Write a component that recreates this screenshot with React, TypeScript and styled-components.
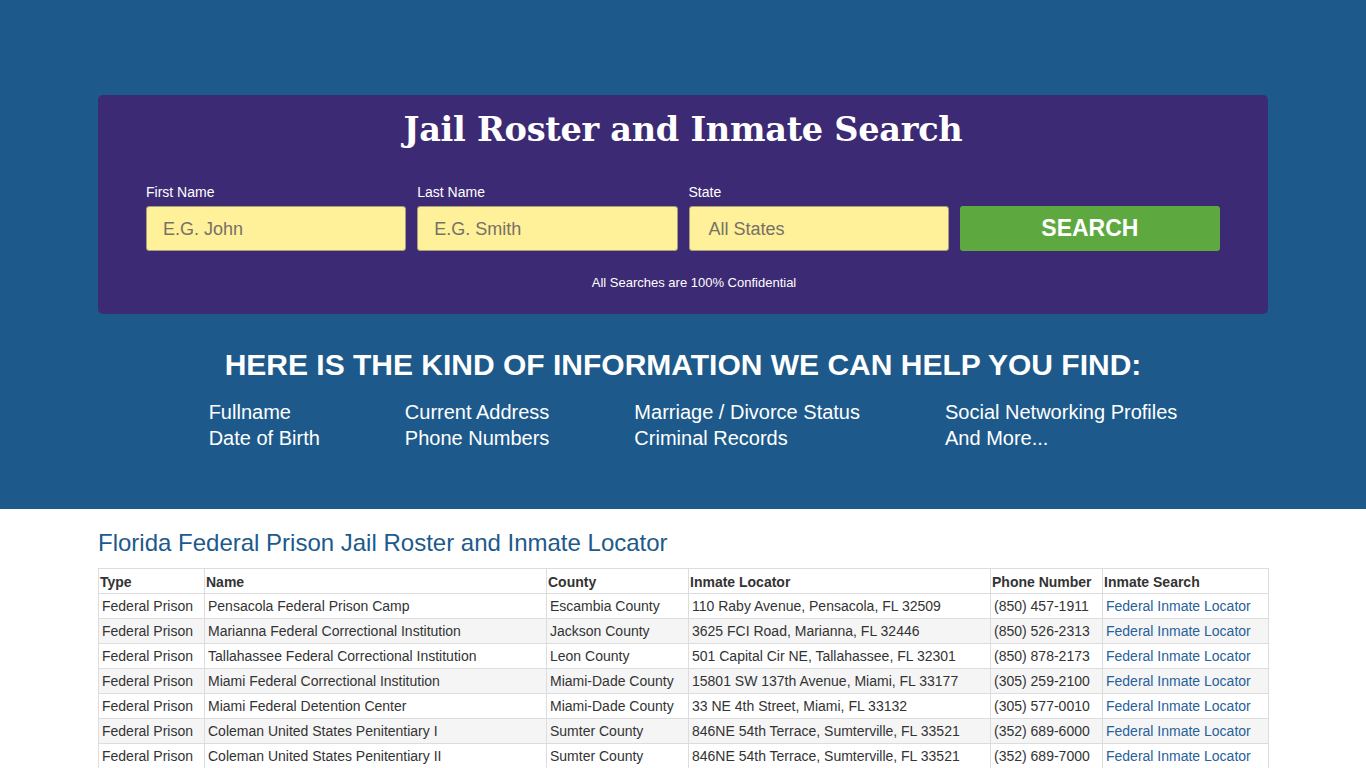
import React from "react";
import styled, { createGlobalStyle } from "styled-components";

const GlobalStyle = createGlobalStyle`
    html, body {
        margin: 0;
        padding: 0;
        background: #ffffff;
        font-family: "Liberation Sans", Arial, sans-serif;
        color: #333333;
    }
    * { box-sizing: border-box; }
`;

const Hero = styled.section`
    background: #1d5a8b;
    padding: 95px 0 58px;
`;

const Container = styled.div`
    width: 1170px;
    margin: 0 auto;
`;

const SearchBox = styled.div`
    background: #3d2a74;
    border-radius: 5px;
    padding: 12px 48px 24px;
`;

const Title = styled.h1`
    margin: 0 0 33px;
    text-align: center;
    color: #ffffff;
    font-family: "DejaVu Serif", Georgia, serif;
    font-weight: bold;
    font-size: 33.6px;
    line-height: 44px;
    letter-spacing: -0.3px;
`;

const FormGrid = styled.div`
    display: grid;
    grid-template-columns: repeat(4, 1fr);
    column-gap: 11px;
    align-items: end;
`;

const Field = styled.div`
    display: flex;
    flex-direction: column;
`;

const Label = styled.label`
    color: #ffffff;
    font-size: 14px;
    line-height: 16px;
    margin-bottom: 6px;
`;

const Input = styled.div<{ $pad?: number }>`
    height: 45px;
    background: #fff09a;
    border: 1px solid #a89d7a;
    border-radius: 3px;
    color: #777166;
    font-size: 18px;
    line-height: 44px;
    padding-left: ${(p) => p.$pad ?? 16}px;
`;

const Button = styled.button`
    height: 45px;
    background: #5ea93f;
    border: none;
    border-radius: 3px;
    color: #ffffff;
    font-family: "Liberation Sans", Arial, sans-serif;
    font-weight: bold;
    font-size: 23px;
    padding-top: 1px;
`;

const Note = styled.p`
    margin: 25px 0 0;
    padding-left: 22px;
    text-align: center;
    color: #ffffff;
    font-size: 13px;
    line-height: 14px;
`;

const InfoHeading = styled.h2`
    margin: 33px 0 16px;
    text-align: center;
    color: #ffffff;
    font-weight: bold;
    font-size: 30px;
    line-height: 36px;
`;

const InfoList = styled.div`
    display: flex;
    justify-content: center;
    gap: 85px;
    padding-left: 20px;
`;

const InfoCol = styled.ul`
    list-style: none;
    margin: 0;
    padding: 0;
    color: #ffffff;
    font-size: 20px;
    line-height: 26px;
`;

const Main = styled.main`
    padding: 18px 0 0;
`;

const SectionTitle = styled.h3`
    margin: 0 0 9px;
    color: #1d5a8b;
    font-weight: normal;
    font-size: 24px;
    line-height: 32px;
`;

const Table = styled.table`
    width: 100%;
    border-collapse: collapse;
    table-layout: fixed;
    font-size: 14px;
`;

const Th = styled.th<{ $w: number }>`
    width: ${(p) => p.$w}px;
    text-align: left;
    font-weight: bold;
    font-size: 14px;
    color: #333333;
    border: 1px solid #dddddd;
    padding: 1px 1px 0;
    height: 25px;
    white-space: nowrap;
`;

const Row = styled.tr`
    &:nth-child(even) {
        background: #f5f5f5;
    }
`;

const Td = styled.td`
    border: 1px solid #dddddd;
    padding: 0 3px;
    height: 25px;
    color: #333333;
    white-space: nowrap;
`;

const Link = styled.a`
    color: #27619a;
    text-decoration: none;
`;

const columns = [
    { label: "Type", w: 106 },
    { label: "Name", w: 342 },
    { label: "County", w: 142 },
    { label: "Inmate Locator", w: 302 },
    { label: "Phone Number", w: 112 },
    { label: "Inmate Search", w: 166 },
];

const prisons = [
    ["Pensacola Federal Prison Camp", "Escambia County", "110 Raby Avenue, Pensacola, FL 32509", "(850) 457-1911"],
    ["Marianna Federal Correctional Institution", "Jackson County", "3625 FCI Road, Marianna, FL 32446", "(850) 526-2313"],
    ["Tallahassee Federal Correctional Institution", "Leon County", "501 Capital Cir NE, Tallahassee, FL 32301", "(850) 878-2173"],
    ["Miami Federal Correctional Institution", "Miami-Dade County", "15801 SW 137th Avenue, Miami, FL 33177", "(305) 259-2100"],
    ["Miami Federal Detention Center", "Miami-Dade County", "33 NE 4th Street, Miami, FL 33132", "(305) 577-0010"],
    ["Coleman United States Penitentiary I", "Sumter County", "846NE 54th Terrace, Sumterville, FL 33521", "(352) 689-6000"],
    ["Coleman United States Penitentiary II", "Sumter County", "846NE 54th Terrace, Sumterville, FL 33521", "(352) 689-7000"],
];

const infoCols = [
    ["Fullname", "Date of Birth"],
    ["Current Address", "Phone Numbers"],
    ["Marriage / Divorce Status", "Criminal Records"],
    ["Social Networking Profiles", "And More..."],
];

const App: React.FC = () => {
    return (
        <>
            <GlobalStyle />
            <Hero>
                <Container>
                    <SearchBox>
                        <Title>Jail Roster and Inmate Search</Title>
                        <FormGrid>
                            <Field>
                                <Label>First Name</Label>
                                <Input>E.G. John</Input>
                            </Field>
                            <Field>
                                <Label>Last Name</Label>
                                <Input>E.G. Smith</Input>
                            </Field>
                            <Field>
                                <Label>State</Label>
                                <Input $pad={19}>All States</Input>
                            </Field>
                            <Button>SEARCH</Button>
                        </FormGrid>
                        <Note>All Searches are 100% Confidential</Note>
                    </SearchBox>
                    <InfoHeading>HERE IS THE KIND OF INFORMATION WE CAN HELP YOU FIND:</InfoHeading>
                    <InfoList>
                        {infoCols.map((col, i) => (
                            <InfoCol key={i}>
                                {col.map((t) => (
                                    <li key={t}>{t}</li>
                                ))}
                            </InfoCol>
                        ))}
                    </InfoList>
                </Container>
            </Hero>
            <Main>
                <Container>
                    <SectionTitle>Florida Federal Prison Jail Roster and Inmate Locator</SectionTitle>
                    <Table>
                        <thead>
                            <tr>
                                {columns.map((c) => (
                                    <Th key={c.label} $w={c.w}>{c.label}</Th>
                                ))}
                            </tr>
                        </thead>
                        <tbody>
                            {prisons.map((p) => (
                                <Row key={p[0]}>
                                    <Td>Federal Prison</Td>
                                    <Td>{p[0]}</Td>
                                    <Td>{p[1]}</Td>
                                    <Td>{p[2]}</Td>
                                    <Td>{p[3]}</Td>
                                    <Td><Link href="#">Federal Inmate Locator</Link></Td>
                                </Row>
                            ))}
                        </tbody>
                    </Table>
                </Container>
            </Main>
        </>
    );
};

export default App;
